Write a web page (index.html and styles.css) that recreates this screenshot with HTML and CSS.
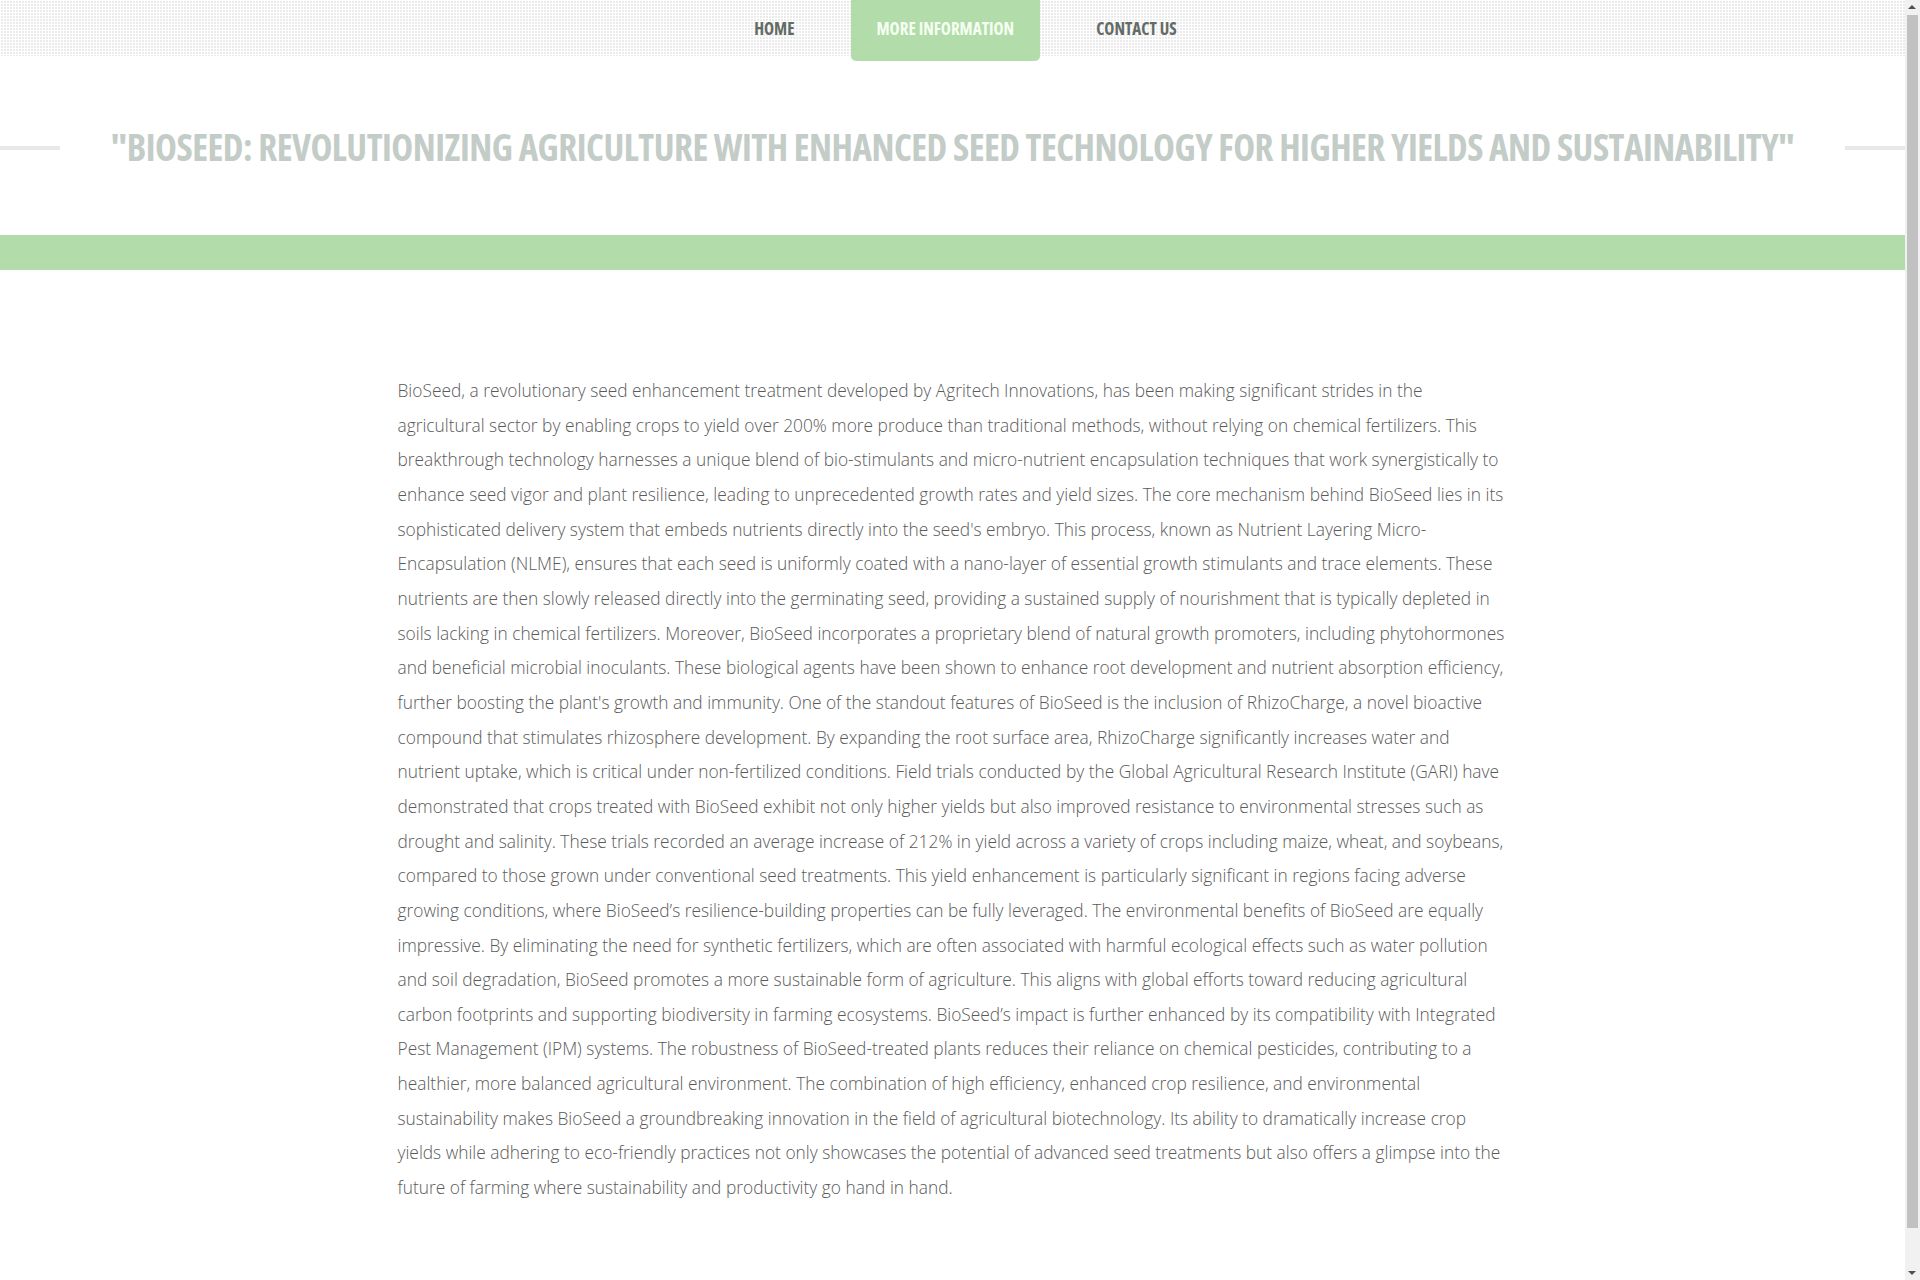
FILE: index.html
```
<!DOCTYPE html>
<html lang="en">
<head>
<meta charset="utf-8">
<title>BioSeed</title>
<link rel="stylesheet" href="styles.css">
</head>
<body>
<header class="topbar">
  <nav class="menu">
    <a class="menu-item" href="#">HOME</a>
    <a class="menu-item active" href="#">MORE INFORMATION</a>
    <a class="menu-item" href="#">CONTACT US</a>
  </nav>
</header>
<section class="headline">
  <span class="rule"></span>
  <h1 class="title">"BIOSEED: REVOLUTIONIZING AGRICULTURE WITH ENHANCED SEED TECHNOLOGY FOR HIGHER YIELDS AND SUSTAINABILITY"</h1>
  <span class="rule"></span>
</section>
<div class="band"></div>
<main class="container">
  <p class="article">BioSeed, a revolutionary seed enhancement treatment developed by Agritech Innovations, has been making significant strides in the agricultural sector by enabling crops to yield over 200% more produce than traditional methods, without relying on chemical fertilizers. This breakthrough technology harnesses a unique blend of bio-stimulants and micro-nutrient encapsulation techniques that work synergistically to enhance seed vigor and plant resilience, leading to unprecedented growth rates and yield sizes. The core mechanism behind BioSeed lies in its sophisticated delivery system that embeds nutrients directly into the seed's embryo. This process, known as Nutrient Layering Micro-Encapsulation (NLME), ensures that each seed is uniformly coated with a nano-layer of essential growth stimulants and trace elements. These nutrients are then slowly released directly into the germinating seed, providing a sustained supply of nourishment that is typically depleted in soils lacking in chemical fertilizers. Moreover, BioSeed incorporates a proprietary blend of natural growth promoters, including phytohormones and beneficial microbial inoculants. These biological agents have been shown to enhance root development and nutrient absorption efficiency, further boosting the plant's growth and immunity. One of the standout features of BioSeed is the inclusion of RhizoCharge, a novel bioactive compound that stimulates rhizosphere development. By expanding the root surface area, RhizoCharge significantly increases water and nutrient uptake, which is critical under non-fertilized conditions. Field trials conducted by the Global Agricultural Research Institute (GARI) have demonstrated that crops treated with BioSeed exhibit not only higher yields but also improved resistance to environmental stresses such as drought and salinity. These trials recorded an average increase of 212% in yield across a variety of crops including maize, wheat, and soybeans, compared to those grown under conventional seed treatments. This yield enhancement is particularly significant in regions facing adverse growing conditions, where BioSeed’s resilience-building properties can be fully leveraged. The environmental benefits of BioSeed are equally impressive. By eliminating the need for synthetic fertilizers, which are often associated with harmful ecological effects such as water pollution and soil degradation, BioSeed promotes a more sustainable form of agriculture. This aligns with global efforts toward reducing agricultural carbon footprints and supporting biodiversity in farming ecosystems. BioSeed’s impact is further enhanced by its compatibility with Integrated Pest Management (IPM) systems. The robustness of BioSeed-treated plants reduces their reliance on chemical pesticides, contributing to a healthier, more balanced agricultural environment. The combination of high efficiency, enhanced crop resilience, and environmental sustainability makes BioSeed a groundbreaking innovation in the field of agricultural biotechnology. Its ability to dramatically increase crop yields while adhering to eco-friendly practices not only showcases the potential of advanced seed treatments but also offers a glimpse into the future of farming where sustainability and productivity go hand in hand.</p>
</main>
<div class="scrollbar" aria-hidden="true">
  <span class="sb-arrow sb-up"></span>
  <span class="sb-thumb"></span>
  <span class="sb-arrow sb-down"></span>
</div>
</body>
</html>
```
FILE: styles.css
```
html, body {
  margin: 0;
  padding: 0;
}
body {
  background: #fff;
  font-family: "Open Sans", "Liberation Sans", sans-serif;
  padding-right: 15px;
}
.topbar {
  height: 56px;
  background-color: #ebebeb;
  background-image:
    linear-gradient(90deg, #fff 1px, transparent 1px),
    linear-gradient(#fff 1px, transparent 1px);
  background-size: 3px 3px;
}
.menu {
  display: flex;
  justify-content: center;
  align-items: flex-start;
  gap: 30px;
  padding-left: 26px;
}
.menu-item {
  display: block;
  height: 55px;
  line-height: 56px;
  padding: 1px 26px 0;
  font-family: "Open Sans", "Liberation Sans", sans-serif;
  font-stretch: 75%;
  font-weight: 700;
  font-size: 17px;
  color: #636b66;
  text-decoration: none;
}
.menu-item.active {
  height: 60px;
  background: #b2dcaa;
  color: #f6fff2;
  border-radius: 0 0 5px 5px;
}
.headline {
  display: flex;
  align-items: center;
  gap: 51px;
  margin-top: 68px;
}
.rule {
  flex: 1;
  height: 4px;
  background: #e8e8e8;
  margin-top: 2px;
}
.title {
  margin: 0;
  font-family: "Open Sans", "Liberation Sans", sans-serif;
  font-stretch: 75%;
  font-weight: 700;
  font-size: 37px;
  letter-spacing: -0.5px;
  line-height: 46px;
  color: #c3ccc7;
  white-space: nowrap;
}
.band {
  height: 35px;
  background: #b2dcaa;
  margin-top: 65px;
}
.container {
  width: 1110px;
  margin: 0 auto;
  padding: 103px 15px 114px;
}
.article {
  margin: 0;
  font-size: 17.33px;
  font-weight: 300;
  line-height: 34.66px;
  color: #5a5a5a;
}
.scrollbar {
  position: fixed;
  top: 0;
  right: 0;
  width: 15px;
  height: 100%;
  background: #f1f1f1;
}
.sb-thumb {
  position: absolute;
  left: 2px;
  right: 2px;
  top: 15px;
  bottom: 52px;
  background: #c1c1c1;
}
.sb-arrow {
  position: absolute;
  left: 3px;
  width: 0;
  height: 0;
  border-left: 4px solid transparent;
  border-right: 4px solid transparent;
}
.sb-up {
  top: 5px;
  border-bottom: 4px solid #505050;
}
.sb-down {
  bottom: 5px;
  border-top: 4px solid #505050;
}
```
